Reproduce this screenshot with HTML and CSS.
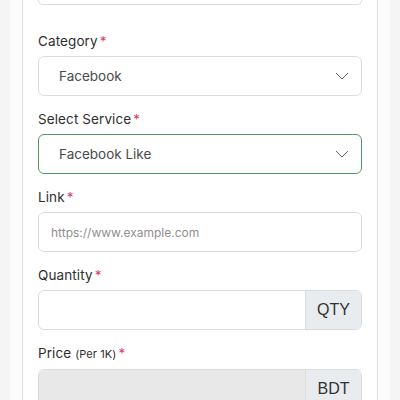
FILE: index.html
```html
<!DOCTYPE html>
<html>
<head>
<meta charset="utf-8">
<link rel="stylesheet" href="styles.css">
</head>
<body>
<div class="wrap">
  <div class="card">
    <div class="prev"></div>
    <div class="group first">
      <label class="label">Category<span class="req">*</span></label>
      <div class="select">
        <span>Facebook</span>
        <svg class="chev" width="14" height="8" viewBox="0 0 14 8"><path d="M1 1l6 6 6-6" fill="none" stroke="#666" stroke-width="1"/></svg>
      </div>
    </div>
    <div class="group">
      <label class="label">Select Service<span class="req">*</span></label>
      <div class="select focus">
        <span>Facebook Like</span>
        <svg class="chev" width="14" height="8" viewBox="0 0 14 8"><path d="M1 1l6 6 6-6" fill="none" stroke="#666" stroke-width="1"/></svg>
      </div>
    </div>
    <div class="group">
      <label class="label">Link<span class="req">*</span></label>
      <div class="input"><span class="ph">https://www.example.com</span></div>
    </div>
    <div class="group">
      <label class="label">Quantity<span class="req">*</span></label>
      <div class="igroup">
        <div class="ifield"></div>
        <div class="addon">QTY</div>
      </div>
    </div>
    <div class="group">
      <label class="label">Price <small>(Per 1K)</small><span class="req">*</span></label>
      <div class="igroup">
        <div class="ifield disabled"></div>
        <div class="addon">BDT</div>
      </div>
    </div>
  </div>
</div>
</body>
</html>
```
FILE: styles.css
```css
* { box-sizing: border-box; }
html, body { margin: 0; padding: 0; }
body {
  background: #f5f5f5;
  font-family: Inter, "Noto Sans", sans-serif;
  height: 400px;
  overflow: hidden;
}
.wrap {
  margin: 0 10px;
  padding: 0 12px;
  background: #fcfcfc;
  height: 420px;
}
.card {
  background: #fff;
  border: 1px solid #e3e3e3;
  border-top: none;
  padding: 0 15px;
  height: 420px;
}
.prev {
  height: 5px;
  border: 1px solid #dcdcdc;
  border-top: none;
  border-radius: 0 0 6px 6px;
}
.group { margin-top: 12px; }
.group.first { margin-top: 25px; }
.label {
  display: block;
  font-size: 13.5px;
  line-height: 22px;
  color: #2f2f2f;
  margin-bottom: 4px;
  letter-spacing: 0.1px;
}
.label small { font-size: 11px; }
.req { color: #d9416a; margin-left: 2px; }
.select, .input, .igroup {
  height: 40px;
  border: 1px solid #dcdcdc;
  border-radius: 6px;
  display: flex;
  align-items: center;
}
.select {
  padding: 0 12px 0 20px;
  justify-content: space-between;
  font-size: 13.5px;
  color: #4a4a4a;
}
.select.focus { border-color: #4f9a69; }
.chev { display: block; }
.input { padding: 0 12px; }
.ph { font-size: 12px; color: #8f8f8f; }
.igroup { overflow: hidden; align-items: stretch; }
.ifield { flex: 1; }
.ifield.disabled { background: #e8e8e8; }
.addon {
  width: 56px;
  background: #e9ecef;
  border-left: 1px solid #dcdcdc;
  display: flex;
  align-items: center;
  justify-content: center;
  font-family: "Liberation Sans", Arial, sans-serif;
  font-size: 16px;
  color: #333;
}
```
